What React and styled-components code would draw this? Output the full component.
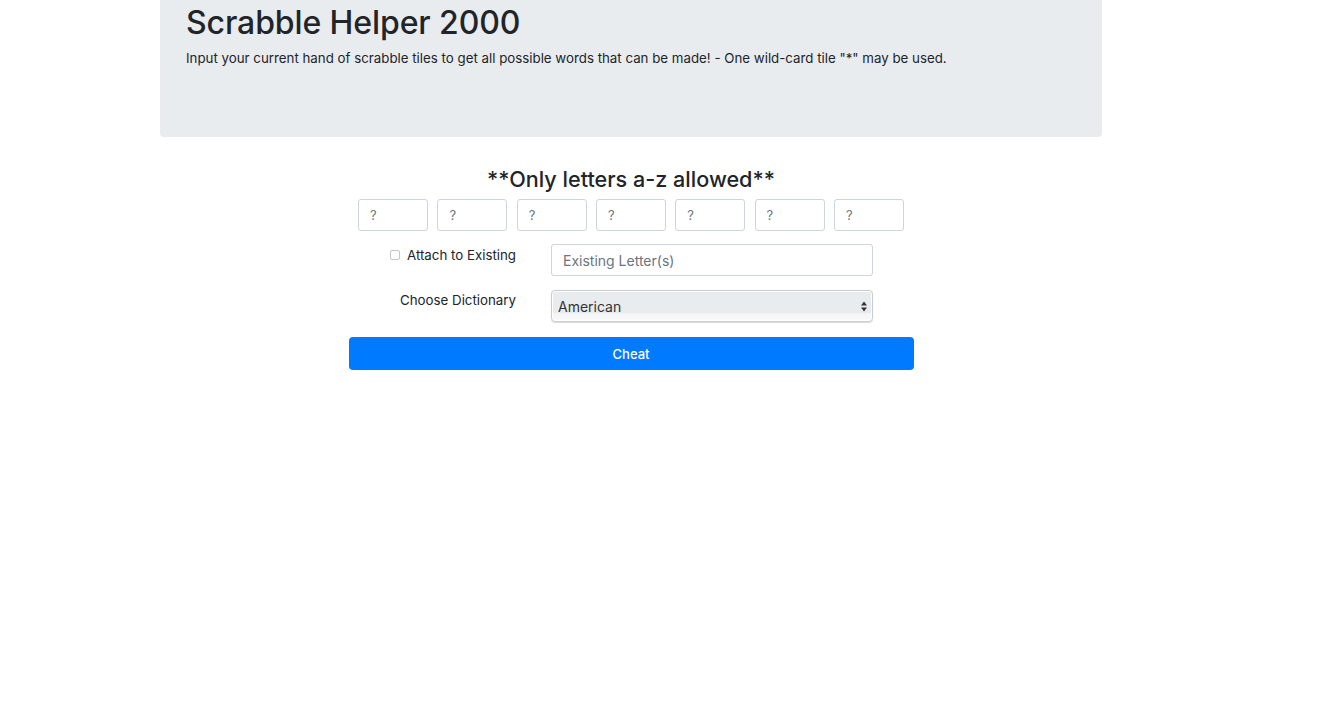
import React from "react";
import styled, { createGlobalStyle } from "styled-components";

const Global = createGlobalStyle`
  html, body { margin: 0; padding: 0; background: #fff; }
  body { font-family: Inter, "Liberation Sans", Arial, sans-serif; color: #212529; }
  * { box-sizing: border-box; }
`;

const Page = styled.div`
  width: 942px;
  margin-left: 160px;
`;

const Jumbotron = styled.header`
  background: #e9ecef;
  height: 137px;
  padding: 3px 26px 0;
  border-radius: 0 0 4px 4px;
`;

const Title = styled.h1`
  margin: 0;
  font-size: 32px;
  font-weight: 500;
  line-height: 40px;
  letter-spacing: -0.1px;
`;

const Lead = styled.p`
  margin: 5px 0 0;
  font-size: 13.3px;
  line-height: 20px;
`;

const Main = styled.main`
  display: flex;
  flex-direction: column;
  align-items: center;
  padding-top: 27px;
`;

const Rule = styled.h2`
  margin: 0;
  font-size: 21.6px;
  font-weight: 500;
  line-height: 30px;
`;

const Tiles = styled.div`
  display: flex;
  gap: 9.3px;
  margin-top: 5px;
`;

const TileInput = styled.input`
  width: 70px;
  height: 32px;
  border: 1px solid #ced4da;
  border-radius: 3px;
  padding: 0 11px;
  font: inherit;
  font-size: 13px;
  color: #495057;
  &::placeholder { color: #6c757d; }
`;

const FormRow = styled.div`
  display: grid;
  width: 546px;
  grid-template-columns: 158px 322px;
  column-gap: 35px;
  align-items: start;
  margin-top: ${p => p.$mt}px;
`;

const LabelCell = styled.label`
  display: flex;
  justify-content: flex-end;
  align-items: center;
  gap: 7px;
  font-size: 13.3px;
  padding-top: ${p => p.$pt}px;
  color: #212529;
`;

const Check = styled.span`
  width: 10px;
  height: 10px;
  border: 1px solid #c5c5c5;
  border-radius: 2px;
  background: #fff;
`;

const TextInput = styled.input`
  width: 322px;
  height: 32px;
  border: 1px solid #ced4da;
  border-radius: 3px;
  padding: 0 11px;
  font: inherit;
  font-size: 14px;
  color: #495057;
  &::placeholder { color: #6c757d; }
`;

const SelectBox = styled.div`
  position: relative;
  width: 322px;
  height: 32px;
  border: 1px solid #c9cdd1;
  border-radius: 4px;
  background: linear-gradient(#e9ecef 0%, #e9ecef 74%, #f3f4f5 75%, #fafafa 100%);
  box-shadow: inset 0 0 0 1px #fff, 0 0.5px 1px rgba(0,0,0,0.15);
  display: flex;
  align-items: center;
  padding-left: 6px;
  font-size: 14px;
  color: #333;
`;

const Arrows = styled.svg`
  position: absolute;
  right: 5px;
  top: 10px;
`;

const Button = styled.button`
  margin-top: 15px;
  width: 565px;
  height: 33px;
  border: none;
  border-radius: 4px;
  background: #007bff;
  color: #fff;
  font: inherit;
  font-size: 13px;
  font-weight: 500;
`;

export default function App() {
  return (
    <>
      <Global />
      <Page>
        <Jumbotron>
          <Title>Scrabble Helper 2000</Title>
          <Lead>
            Input your current hand of scrabble tiles to get all possible words that can be made! - One wild-card tile "*" may be used.
          </Lead>
        </Jumbotron>
        <Main>
          <Rule>**Only letters a-z allowed**</Rule>
          <Tiles>
            {Array.from({ length: 7 }).map((_, i) => (
              <TileInput key={i} placeholder="?" />
            ))}
          </Tiles>
          <FormRow $mt={13}>
            <LabelCell $pt={3}>
              <Check />
              Attach to Existing
            </LabelCell>
            <TextInput placeholder="Existing Letter(s)" />
          </FormRow>
          <FormRow $mt={14}>
            <LabelCell $pt={2}>Choose Dictionary</LabelCell>
            <SelectBox>
              American
              <Arrows width="6" height="11" viewBox="0 0 6 11">
                <path d="M3 0.5 L6 4.5 H0 Z M3 10.5 L6 6.5 H0 Z" fill="#333" />
              </Arrows>
            </SelectBox>
          </FormRow>
          <Button>Cheat</Button>
        </Main>
      </Page>
    </>
  );
}
